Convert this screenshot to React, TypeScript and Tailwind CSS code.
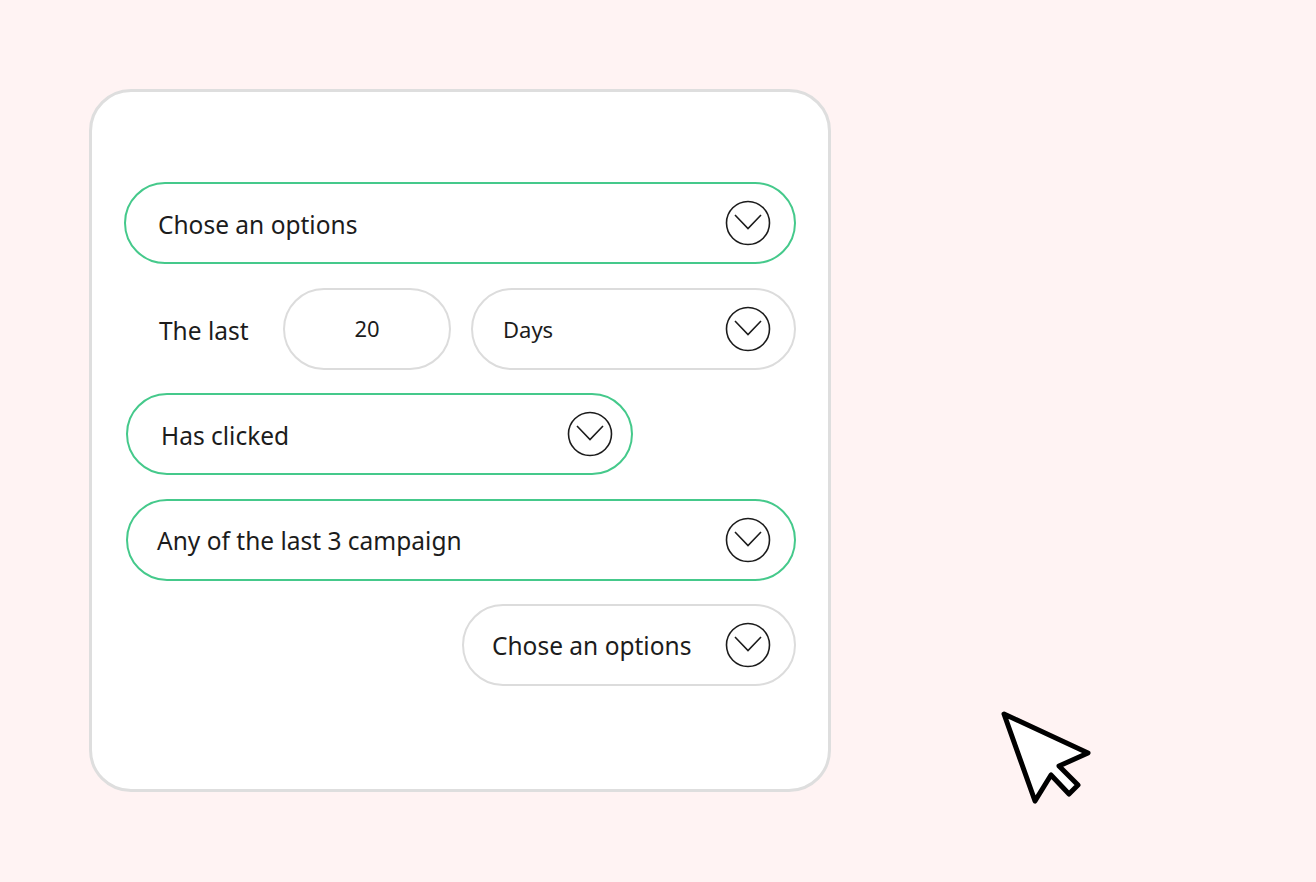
import { ReactNode } from "react";

function ChevronCircle() {
  return (
    <svg width="46" height="46" viewBox="0 0 46 46" fill="none" className="shrink-0">
      <circle cx="23" cy="23" r="21.5" stroke="#1c1c1c" strokeWidth="1.6" />
      <polyline points="10,15 23,28.5 36,15" stroke="#1c1c1c" strokeWidth="1.6" strokeLinejoin="miter" />
    </svg>
  );
}

function Pill({
  children,
  active,
  className = "",
}: {
  children: ReactNode;
  active?: boolean;
  className?: string;
}) {
  return (
    <div
      className={
        "h-[82px] rounded-full border-2 bg-white flex items-center justify-between " +
        (active ? "border-[#45c98b] " : "border-[#dcdcdc] ") +
        className
      }
    >
      {children}
    </div>
  );
}

export default function App() {
  return (
    <div
      className="relative w-[1316px] h-[882px] bg-[#fff3f3] pt-[89px] pl-[89px] text-[#1c1c1c]"
      style={{ fontFamily: '"Noto Sans", "Open Sans", sans-serif' }}
    >
      {/* Filter card */}
      <div className="w-[742px] h-[703px] rounded-[42px] border-[3px] border-[#dedede] bg-white px-[32px] pt-[90px] flex flex-col gap-[23.5px]">
        <Pill active className="pl-[32px] pr-[23px]">
          <span className="text-[24.5px] leading-none pt-[4px]">Chose an options</span>
          <ChevronCircle />
        </Pill>

        <div className="flex items-center">
          <span className="w-[159px] shrink-0 pl-[35px] text-[24.5px] leading-none pt-[6px]">The last</span>
          <Pill className="w-[168px] justify-center">
            <span className="text-[22px] leading-none -mt-[2px]">20</span>
          </Pill>
          <Pill className="flex-1 ml-[20px] pl-[30px] pr-[23px]">
            <span className="text-[22px] leading-none">Days</span>
            <ChevronCircle />
          </Pill>
        </div>

        <Pill active className="ml-[2px] w-[507px] pl-[33px] pr-[18px]">
          <span className="text-[24.5px] leading-none pt-[4px]">Has clicked</span>
          <ChevronCircle />
        </Pill>

        <Pill active className="ml-[2px] pl-[29px] pr-[23px]">
          <span className="text-[24.5px] leading-none pt-[4px]">Any of the last 3 campaign</span>
          <ChevronCircle />
        </Pill>

        <div className="flex justify-end">
          <Pill className="w-[334px] pl-[28px] pr-[23px]">
            <span className="text-[24.5px] leading-none pt-[2px]">Chose an options</span>
            <ChevronCircle />
          </Pill>
        </div>
      </div>

      {/* Pointer */}
      <svg
        width="96"
        height="100"
        viewBox="0 0 96 100"
        fill="none"
        className="absolute left-[1000px] top-[710px]"
      >
        <path
          d="M4 4 L88 43 L59 56 L78 75 L69 84 L51 65 L35 91 Z"
          fill="#ffffff"
          stroke="#000000"
          strokeWidth="5"
          strokeLinejoin="round"
        />
      </svg>
    </div>
  );
}
